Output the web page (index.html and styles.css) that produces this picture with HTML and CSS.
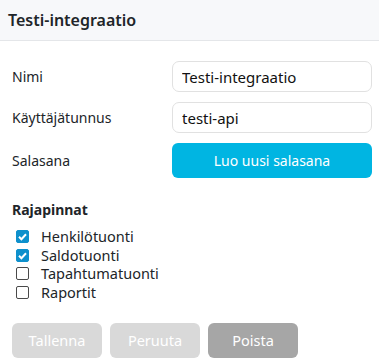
FILE: index.html
```html
<!DOCTYPE html>
<html>
	<head>
		<meta charset="utf-8">
		<title>Testi-integraatio</title>
		<link rel="stylesheet" href="styles.css">
	</head>
	<body>
		<div class="header">Testi-integraatio</div>
		<div class="content">
			<div class="form">
				<label class="lbl" for="nimi">Nimi</label>
				<input id="nimi" class="field" type="text" value="Testi-integraatio">
				<label class="lbl" for="tunnus">Käyttäjätunnus</label>
				<input id="tunnus" class="field" type="text" value="testi-api">
				<span class="lbl">Salasana</span>
				<button class="btn primary" type="button">Luo uusi salasana</button>
			</div>
			<div class="section">Rajapinnat</div>
			<ul class="checks">
				<li><label><input type="checkbox" checked> Henkilötuonti</label></li>
				<li><label><input type="checkbox" checked> Saldotuonti</label></li>
				<li><label><input type="checkbox"> Tapahtumatuonti</label></li>
				<li><label><input type="checkbox"> Raportit</label></li>
			</ul>
			<div class="actions">
				<button class="btn disabled" type="button">Tallenna</button>
				<button class="btn disabled" type="button">Peruuta</button>
				<button class="btn grey" type="button">Poista</button>
			</div>
		</div>
	</body>
</html>
```
FILE: styles.css
```css
body{
	margin: 0;
	font-family: "Noto Sans", "Open Sans", sans-serif;
	font-size: 14px;
	color: #212529;
	background: #fff;
}
.header{
	height: 41px;
	line-height: 40px;
	padding: 0 8px;
	background: #f7f8fa;
	border-bottom: 1px solid #e4e6e9;
	font-size: 16px;
	font-weight: 600;
	box-sizing: border-box;
}
.content{
	padding: 20px 7px 0 12px;
}
.form{
	display: grid;
	grid-template-columns: 160px 200px;
	row-gap: 10px;
	align-items: center;
}
.field{
	height: 31px;
	box-sizing: border-box;
	border: 1px solid #e1e1e1;
	border-radius: 7px;
	padding: 0 9px;
	font-family: inherit;
	font-size: 15px;
	color: #111;
	outline: none;
}
.btn{
	height: 35px;
	border: none;
	border-radius: 6px;
	color: #fff;
	font-family: inherit;
	font-size: 14px;
}
.primary{ background: #00b5e2; }
.section{
	margin-top: 22px;
	font-weight: 700;
}
.checks{
	list-style: none;
	margin: 8px 0 0 4px;
	padding: 0;
}
.checks li{
	height: 18.7px;
	line-height: 18.7px;
}
.checks label{
	display: flex;
	align-items: center;
	gap: 12px;
	font-size: 14.5px;
}
.checks input{
	appearance: none;
	width: 13px;
	height: 13px;
	margin: 0;
	border: 1px solid #4a4a4a;
	border-radius: 2px;
	background: #fff;
	flex: none;
}
.checks input:checked{
	border-color: #0e90cc;
	background: #0e90cc url("data:image/svg+xml,%3Csvg xmlns='http://www.w3.org/2000/svg' viewBox='0 0 13 13'%3E%3Cpath d='M3 6.8l2.4 2.4L10 4.2' fill='none' stroke='%23fff' stroke-width='2'/%3E%3C/svg%3E") center/13px no-repeat;
}
.actions{
	display: flex;
	gap: 8px;
	margin-top: 21px;
}
.actions .btn{ width: 90px; font-size: 14.5px; }
.disabled{ background: #d9d9d9; }
.grey{ background: #a6a6a6; }
```
